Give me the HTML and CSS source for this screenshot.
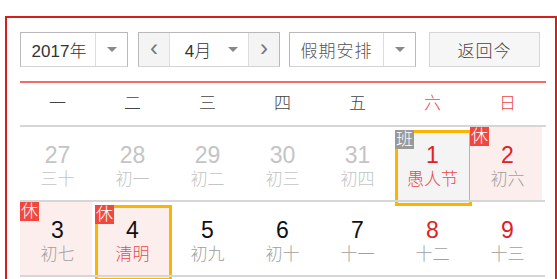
FILE: index.html
```html
<!DOCTYPE html>
<html lang="zh-CN">
<head>
    <meta charset="UTF-8">
    <title>万年历</title>
    <link rel="stylesheet" href="styles.css">
</head>
<body>
    <div class="calendar">
        <div class="toolbar">
            <div class="select year-select">
                <span class="select-text">2017年</span>
                <span class="select-arrow"></span>
            </div>
            <div class="month-group">
                <span class="nav-btn">&lsaquo;</span>
                <div class="select month-select">
                    <span class="select-text">4月</span>
                    <span class="select-arrow"></span>
                </div>
                <span class="nav-btn">&rsaquo;</span>
            </div>
            <div class="select holiday-select">
                <span class="select-text">假期安排</span>
                <span class="select-arrow"></span>
            </div>
            <button class="today-btn">返回今</button>
        </div>

        <div class="week-head">
            <span>一</span>
            <span>二</span>
            <span>三</span>
            <span>四</span>
            <span>五</span>
            <span class="weekend">六</span>
            <span class="weekend">日</span>
        </div>

        <div class="days">
            <div class="day other"><b>27</b><i>三十</i></div>
            <div class="day other"><b>28</b><i>初一</i></div>
            <div class="day other"><b>29</b><i>初二</i></div>
            <div class="day other"><b>30</b><i>初三</i></div>
            <div class="day other"><b>31</b><i>初四</i></div>
            <div class="day work today weekend"><span class="badge">班</span><b>1</b><i class="fest">愚人节</i></div>
            <div class="day rest weekend"><span class="badge">休</span><b>2</b><i>初六</i></div>

            <div class="day rest"><span class="badge">休</span><b>3</b><i>初七</i></div>
            <div class="day rest today"><span class="badge">休</span><b>4</b><i class="fest">清明</i></div>
            <div class="day"><b>5</b><i>初九</i></div>
            <div class="day"><b>6</b><i>初十</i></div>
            <div class="day"><b>7</b><i>十一</i></div>
            <div class="day weekend"><b>8</b><i>十二</i></div>
            <div class="day weekend"><b>9</b><i>十三</i></div>
        </div>
    </div>
</body>
</html>
```

FILE: styles.css
```css
* {
    margin: 0;
    padding: 0;
    box-sizing: border-box;
    font-family: "Liberation Sans", "Noto Sans CJK SC", sans-serif;
}

body {
    background: #fff;
    overflow: hidden;
}

/* el marco rojo sigue por debajo de la ventana */
.calendar {
    margin: 16px 0 0 5px;
    width: 552px;
    height: 263px;
    border: 2px solid #d3201b;
    border-bottom: 0;
    padding: 14px 0 0 13px;
}

/* barra superior */
.toolbar {
    display: flex;
    height: 35px;
    width: 526px;
}

.select {
    display: flex;
    height: 35px;
    border: 1px solid #b9b9b9;
    border-bottom-color: #d4d4d4;
    background: #fff;
}

.select-text {
    flex: 1;
    display: flex;
    align-items: center;
    justify-content: center;
    font-size: 17px;
    font-weight: 300;
    color: #333;
}

.select-arrow {
    width: 32px;
    border-left: 1px solid #ddd;
    display: flex;
    align-items: center;
    justify-content: center;
}

.select-arrow::after {
    content: "";
    border-left: 5px solid transparent;
    border-right: 5px solid transparent;
    border-top: 5px solid #888;
}

.year-select {
    width: 108px;
}

.year-select .select-text {
    padding-left: 2px;
}

.month-group {
    display: flex;
    margin-left: 10px;
    height: 35px;
    border: 1px solid #b9b9b9;
    border-bottom-color: #d4d4d4;
}

.nav-btn {
    width: 30px;
    background: #f4f4f4;
    display: flex;
    align-items: center;
    justify-content: center;
    font-size: 24px;
    line-height: 1;
    color: #777;
    padding-bottom: 3px;
}

.month-select {
    width: 80px;
    height: 33px;
    border: none;
    border-left: 1px solid #ddd;
    border-right: 1px solid #ddd;
}

.month-select .select-arrow {
    border-left: none;
    width: 30px;
}

.month-select .select-text {
    padding-left: 8px;
}

.holiday-select {
    width: 127px;
    margin-left: 9px;
}

.holiday-select .select-text {
    color: #555;
    letter-spacing: 1px;
}

.today-btn {
    width: 111px;
    height: 35px;
    margin-left: 13px;
    background: #f6f6f6;
    border: 1px solid #d6d6d6;
    font-size: 17px;
    font-weight: 300;
    color: #444;
    letter-spacing: 1px;
}

/* cabecera de semana */
.week-head {
    display: grid;
    grid-template-columns: repeat(7, 75px);
    width: 526px;
    margin-top: 14px;
    border-top: 2px solid #f36a6a;
    border-bottom: 2px solid #d6d6d6;
    height: 46px;
}

.week-head span {
    display: flex;
    align-items: center;
    justify-content: center;
    font-size: 17px;
    font-weight: 300;
    color: #444;
    padding-bottom: 6px;
}

.week-head .weekend {
    color: #f04848;
}

/* dias */
.days {
    display: grid;
    grid-template-columns: repeat(7, 75px);
    width: 526px;
}

.day {
    position: relative;
    height: 75px;
    border-bottom: 2px solid #d6d6d6;
    display: flex;
    flex-direction: column;
    align-items: center;
}

.day b,
.day i {
    font-style: normal;
    font-weight: normal;
}

.day b {
    margin-top: 15px;
    font-size: 23px;
    line-height: 26px;
    color: #111;
}

.day i {
    margin-top: 1px;
    font-size: 17px;
    font-weight: 300;
    line-height: 22px;
    color: #a0a0a0;
}

.day::before {
    content: "";
    position: absolute;
    left: 0;
    top: 0;
    width: 72px;
    height: 73px;
    z-index: -1;
}

.day.weekend b {
    color: #dd2222;
}

.day.other b,
.day.other i {
    color: #c4c4c4;
}

.day .fest {
    color: #ea4a4a;
}

.day.rest::before {
    background: #fdeeee;
}

.day.work::before {
    background: #f4f4f4;
}

.day.today::before {
    top: 3px;
    width: 71px;
    height: 70px;
    border: 3px solid #fbb500;
}

.badge {
    position: absolute;
    left: 0;
    top: 0;
    width: 19px;
    height: 19px;
    font-size: 17px;
    font-weight: 300;
    line-height: 19px;
    text-align: center;
    color: #fff;
    background: #f2473f;
}

.day.today .badge {
    top: 3px;
}

.day.work .badge {
    background: #999;
}
```
